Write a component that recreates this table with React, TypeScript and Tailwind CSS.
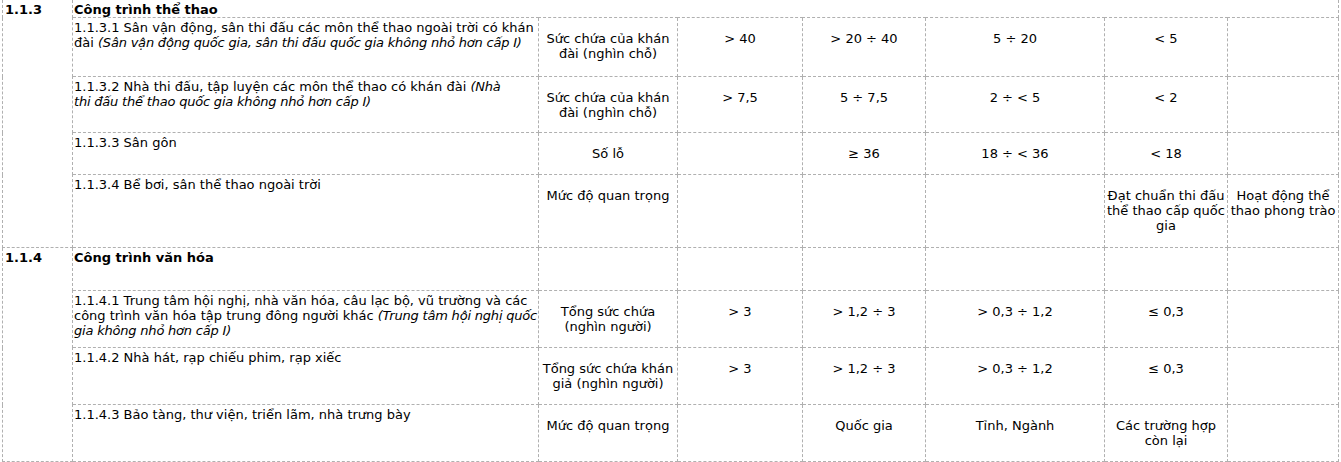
const cell = "border border-dashed border-[#b0b0b0] align-top"
const left = `${cell} pl-[1px] pt-[2px] text-left`
const mid = `${cell} px-[1px] pt-[13px] text-center`
const it = "italic tracking-[-0.2px]"

type Row = {
  h: string
  code?: { text: string; span: number }
  name: React.ReactNode
  bold?: boolean
  cols?: React.ReactNode[]
  span?: number
  first?: boolean
}

const rows: Row[] = [
  {
    h: "h-[17px]",
    first: true,
    code: { text: "1.1.3", span: 5 },
    name: "Công trình thể thao",
    bold: true,
    span: 7,
  },
  {
    h: "h-[59px]",
    name: (
      <>
        1.1.3.1 Sân vận động, sân thi đấu các môn thể thao ngoài trời có khán
        <br />
        đài <span className={it}>(Sân vận động quốc gia, sân thi đấu quốc gia không nhỏ hơn cấp I)</span>
      </>
    ),
    cols: [
      <>
        Sức chứa của khán
        <br />
        đài (nghìn chỗ)
      </>,
      "> 40",
      "> 20 ÷ 40",
      "5 ÷ 20",
      "< 5",
      "",
    ],
  },
  {
    h: "h-[56px]",
    name: (
      <>
        1.1.3.2 Nhà thi đấu, tập luyện các môn thể thao có khán đài <span className={it}>(Nhà</span>
        <br />
        <span className={it}>thi đấu thể thao quốc gia không nhỏ hơn cấp I)</span>
      </>
    ),
    cols: [
      <>
        Sức chứa của khán
        <br />
        đài (nghìn chỗ)
      </>,
      "> 7,5",
      "5 ÷ 7,5",
      "2 ÷ < 5",
      "< 2",
      "",
    ],
  },
  {
    h: "h-[42px]",
    name: "1.1.3.3 Sân gôn",
    cols: ["Số lỗ", "", "≥ 36", "18 ÷ < 36", "< 18", ""],
  },
  {
    h: "h-[73px]",
    name: "1.1.3.4 Bể bơi, sân thể thao ngoài trời",
    cols: [
      "Mức độ quan trọng",
      "",
      "",
      "",
      <>
        Đạt chuẩn thi đấu
        <br />
        thể thao cấp quốc
        <br />
        gia
      </>,
      <>
        Hoạt động thể
        <br />
        thao phong trào
      </>,
    ],
  },
  {
    h: "h-[43px]",
    code: { text: "1.1.4", span: 4 },
    name: "Công trình văn hóa",
    bold: true,
    cols: ["", "", "", "", "", ""],
  },
  {
    h: "h-[57px]",
    name: (
      <>
        1.1.4.1 Trung tâm hội nghị, nhà văn hóa, câu lạc bộ, vũ trường và các
        <br />
        công trình văn hóa tập trung đông người khác <span className={it}>(Trung tâm hội nghị quốc</span>
        <br />
        <span className={it}>gia không nhỏ hơn cấp I)</span>
      </>
    ),
    cols: [
      <>
        Tổng sức chứa
        <br />
        (nghìn người)
      </>,
      "> 3",
      "> 1,2 ÷ 3",
      "> 0,3 ÷ 1,2",
      "≤ 0,3",
      "",
    ],
  },
  {
    h: "h-[57px]",
    name: "1.1.4.2 Nhà hát, rạp chiếu phim, rạp xiếc",
    cols: [
      <>
        Tổng sức chứa khán
        <br />
        giả (nghìn người)
      </>,
      "> 3",
      "> 1,2 ÷ 3",
      "> 0,3 ÷ 1,2",
      "≤ 0,3",
      "",
    ],
  },
  {
    h: "h-[57px]",
    name: "1.1.4.3 Bảo tàng, thư viện, triển lãm, nhà trưng bày",
    cols: [
      "Mức độ quan trọng",
      "",
      "Quốc gia",
      "Tỉnh, Ngành",
      <>
        Các trường hợp
        <br />
        còn lại
      </>,
      "",
    ],
  },
]

export default function App() {
  return (
    <div className="min-h-screen bg-white text-[13px] leading-[15px] text-black [font-family:'DejaVu_Sans',sans-serif]">
      <table className="ml-[2px] w-[1336px] table-fixed border-collapse">
        <colgroup>
          <col className="w-[70px]" />
          <col className="w-[466px]" />
          <col className="w-[139px]" />
          <col className="w-[125px]" />
          <col className="w-[123px]" />
          <col className="w-[179px]" />
          <col className="w-[123px]" />
          <col className="w-[111px]" />
        </colgroup>
        <tbody>
          {rows.map((r, i) => (
            <tr key={i} className={r.h}>
              {r.code && (
                <td
                  rowSpan={r.code.span}
                  className={`${left} pl-[2px] font-bold ${r.first ? "border-t-0" : ""}`}
                >
                  {r.code.text}
                </td>
              )}
              <td
                colSpan={r.span ?? 1}
                className={`${left} whitespace-nowrap ${r.bold ? "font-bold" : ""} ${
                  r.first ? "border-t-0" : ""
                }`}
              >
                {r.name}
              </td>
              {r.cols?.map((c, j) => (
                <td key={j} className={`${mid} whitespace-nowrap`}>
                  {c}
                </td>
              ))}
            </tr>
          ))}
        </tbody>
      </table>
    </div>
  )
}
